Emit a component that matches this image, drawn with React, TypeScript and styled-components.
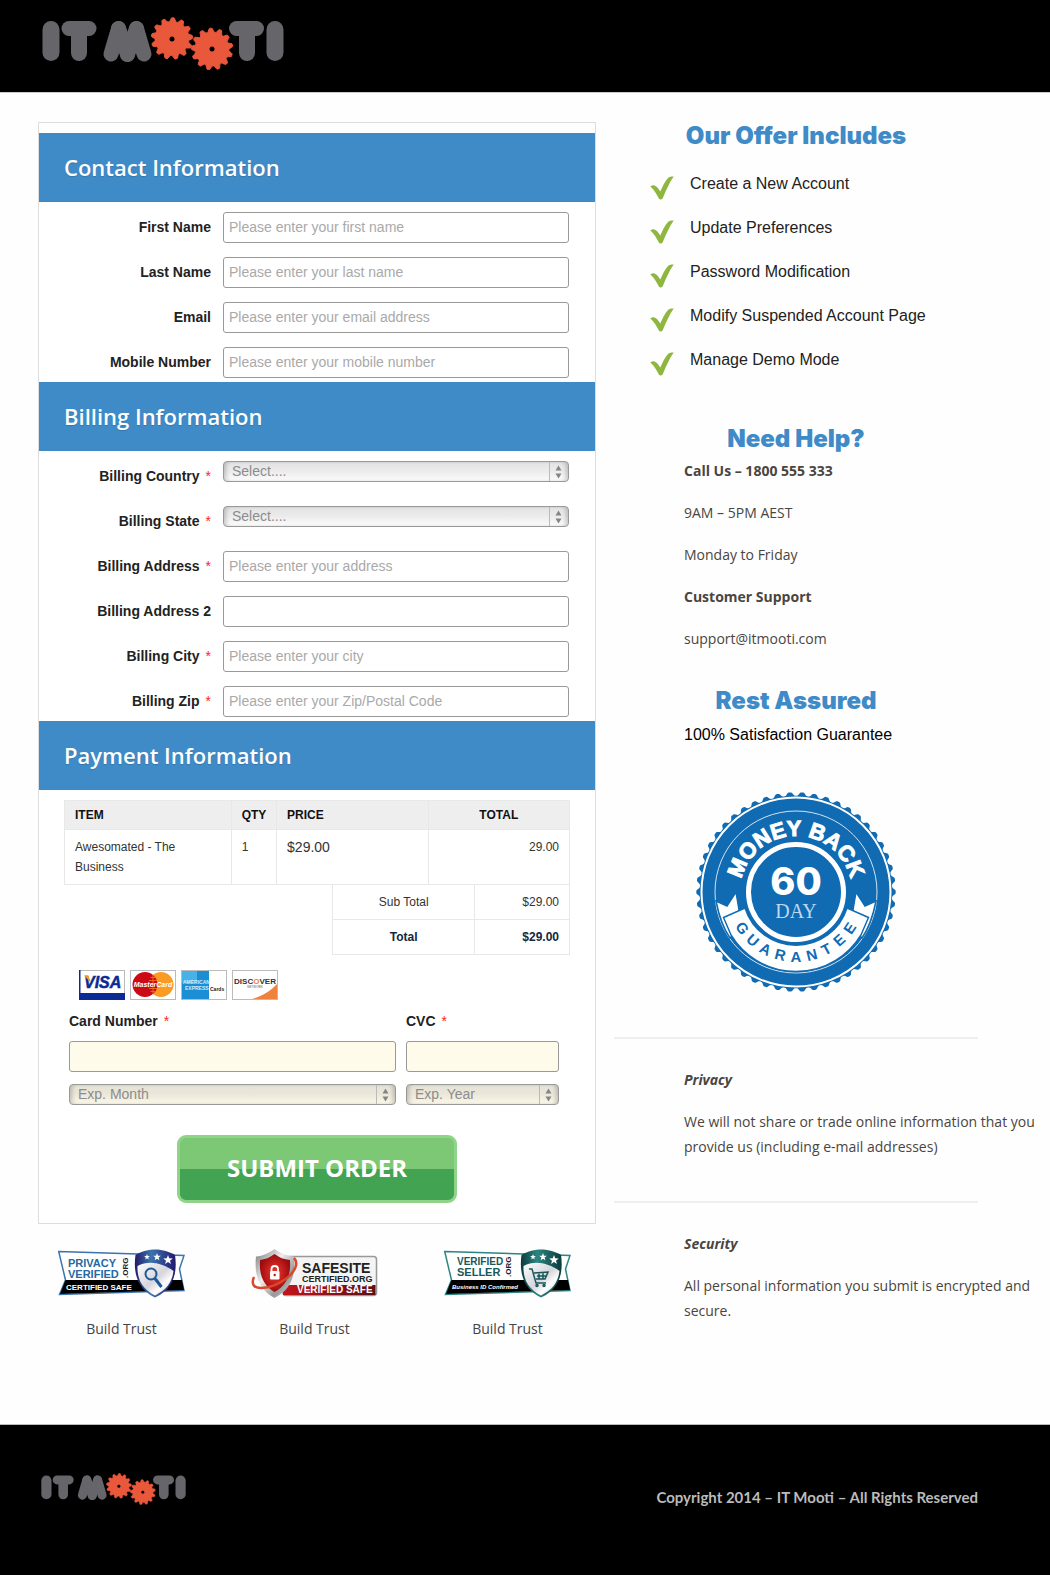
import React from "react";
import styled, { createGlobalStyle } from "styled-components";

const sans = `"Liberation Sans", Arial, Helvetica, sans-serif`;
const humanist = `"Open Sans", "Noto Sans", sans-serif`;
const heavy = `Inter, "Arial Black", sans-serif`;

const GlobalStyle = createGlobalStyle`
  *, *::before, *::after { box-sizing: border-box; }
  body { margin: 0; background: #fefefe; font-family: ${sans}; color: #222; }
  h2, p, ul { margin: 0; padding: 0; }
`;

/* ---------- page frame ---------- */

const Header = styled.header`
  display: flex;
  align-items: flex-start;
  height: 93px;
  padding: 17px 42px 0;
  background: #000;
  border-bottom: 1px solid #ccc;
`;

const Main = styled.main`
  display: grid;
  grid-template-columns: 558fr 436fr;
  gap: 18px;
  padding: 29px 0 83px 38px;
`;

const Footer = styled.footer`
  display: flex;
  align-items: center;
  justify-content: space-between;
  height: 151px;
  padding: 0 72px 22px 41px;
  background: #000;
  border-top: 1px solid #bbb;
`;

const Copyright = styled.p`
  font: 700 15px/24px Lato, sans-serif;
  color: #bbb;
  padding-top: 16px;
`;

/* ---------- order form ---------- */

const Panel = styled.form`
  padding: 10px 0 20px;
  border: 1px solid #ddd;
  background: #fff;
`;

const SectionTitle = styled.h2`
  padding: 0 25px 1px;
  background: #3f8bc8;
  color: #fff;
  font: 600 22px/68px ${humanist};
  text-shadow: 0 1px 1px rgba(0, 0, 0, 0.15);
`;

const FieldRow = styled.div`
  display: grid;
  grid-template-columns: 172px 1fr;
  column-gap: 12px;
  align-items: start;
  height: 45px;
  padding: 10px 26px 0 0;
`;

const Label = styled.label<{ $align?: "left" | "right" }>`
  font: 700 14px/31px ${sans};
  text-align: ${(p) => p.$align ?? "right"};
`;

const Star = styled.span`
  margin-left: 6px;
  color: #f22;
  font-weight: 400;
`;

const TextInput = styled.input<{ $cream?: boolean }>`
  width: 100%;
  height: 31px;
  padding: 0 5px 2px;
  border: 1px solid #999;
  border-radius: 3px;
  background: ${(p) => (p.$cream ? "#fffbea" : "#fff")};
  font: 14px ${sans};
  color: #333;
  &::placeholder { color: #a9a9a9; opacity: 1; }
`;

const SelectBox = styled.div`
  position: relative;
  height: 21px;
`;

const StyledSelect = styled.select<{ $cream?: boolean }>`
  display: block;
  width: 100%;
  height: 21px;
  padding: 0 26px 1px 8px;
  appearance: none;
  border: 1px solid #999;
  border-radius: 4px;
  background: ${(p) =>
    p.$cream
      ? "linear-gradient(#e4e1d5, #ebe8db 50%, #fbf8e8)"
      : "linear-gradient(#e2e2e2, #ececec 50%, #fcfcfc)"};
  box-shadow: inset 4px 0 4px -2px rgba(0, 0, 0, 0.2), inset -4px 0 4px -2px rgba(0, 0, 0, 0.2);
  font: 14px/18px ${sans};
  color: #8c8c8c;
`;

const Arrows = styled.svg`
  position: absolute;
  top: 1px;
  right: 1px;
  pointer-events: none;
`;

const PaymentBody = styled.div`
  padding: 10px 25px 0;
`;

const ItemsTable = styled.table<{ $totals?: boolean }>`
  width: ${(p) => (p.$totals ? "47%" : "100%")};
  margin-left: auto;
  margin-top: ${(p) => (p.$totals ? "-1px" : "0")};
  border-collapse: collapse;
  table-layout: fixed;
`;

const Th = styled.th<{ $center?: boolean }>`
  padding: 4px 10px;
  border: 1px solid #e8e8e8;
  background: #eee;
  color: #111;
  font: 700 12px/20px ${sans};
  text-align: ${(p) => (p.$center ? "center" : "left")};
`;

const Td = styled.td<{ $align?: string; $large?: boolean; $strong?: boolean }>`
  padding: 7px 10px;
  border: 1px solid #e8e8e8;
  font-family: ${sans};
  font-size: ${(p) => (p.$large ? "14px" : "12px")};
  font-weight: ${(p) => (p.$strong ? 700 : 400)};
  line-height: 20px;
  color: ${(p) => (p.$strong ? "#12283c" : "#333")};
  text-align: ${(p) => p.$align ?? "left"};
  vertical-align: top;
`;

const CardLogos = styled.div`
  display: flex;
  gap: 5px;
  padding: 15px 15px 6px;
`;

const CardGrid = styled.div`
  display: grid;
  grid-template-columns: 327fr 153fr;
  column-gap: 10px;
  padding: 0 11px 0 5px;
`;

const CardField = styled.div`
  display: grid;
  grid-template-rows: 35px 31px 21px;
  row-gap: 0;
  & > ${SelectBox} { margin-top: 12px; }
`;

const Submit = styled.button`
  display: block;
  width: 280px;
  height: 68px;
  margin: 42px auto 0;
  padding: 0 0 3px;
  border: 3px solid #8fd488;
  border-radius: 9px;
  background: linear-gradient(#7cc875 50%, #42a352 50%);
  color: #fff;
  font: 700 24px/59px ${humanist};
  cursor: pointer;
`;

const TrustRow = styled.div`
  display: flex;
  justify-content: space-between;
  padding: 25px 25px 0 20px;
`;

const TrustItem = styled.figure`
  display: grid;
  justify-items: center;
  row-gap: 18px;
  margin: 0;
`;

const TrustCaption = styled.figcaption`
  font: 14px/25px ${humanist};
  color: #444;
`;

/* ---------- side column ---------- */

const SideTitle = styled.h2`
  margin-right: 72px;
  color: #3f8bc8;
  font: 900 24px/28px ${heavy};
  text-align: center;
`;

const OfferList = styled.ul`
  margin: 12px 0 43px 36px;
  list-style: none;
`;

const OfferItem = styled.li`
  display: grid;
  grid-template-columns: 24px 1fr;
  column-gap: 16px;
  height: 44px;
  padding-top: 12px;
  font: 16px/20px ${sans};
  & > svg { margin-top: 2px; }
`;

const Copy = styled.div<{ $top: number; $bottom: number }>`
  display: grid;
  row-gap: 17px;
  padding: ${(p) => p.$top}px 0 ${(p) => p.$bottom}px 70px;
  font: 14px/25px ${humanist};
  color: #4a4540;
`;

const Guarantee = styled.p`
  font: 16px/25px ${sans};
  color: #000;
`;

const SealHolder = styled.div`
  display: flex;
  justify-content: center;
  margin: 0 72px 45px 0;
`;

const Rule = styled.hr`
  height: 2px;
  margin: 0 72px 0 0;
  border: 0;
  background: #eee;
`;

/* ---------- drawings ---------- */

function wave(cx: number, cy: number, r: number, amp: number, n: number, phase = 0) {
  const pts: string[] = [];
  const steps = n * 12;
  for (let i = 0; i < steps; i++) {
    const a = (i / steps) * Math.PI * 2;
    const k = Math.max(-1, Math.min(1, 1.5 * Math.cos(n * a + phase)));
    const d = r + amp * k;
    pts.push(`${(cx + d * Math.cos(a)).toFixed(2)},${(cy + d * Math.sin(a)).toFixed(2)}`);
  }
  return pts.join(" ");
}

const grey = "#66656a";

function Logo({ width }: { width: number }) {
  return (
    <svg width={width} viewBox="0 0 242 53" role="img" aria-label="IT Mooti">
      <g fill={grey}>
        <rect x="0.5" y="4" width="17" height="40" rx="8.5" />
        <rect x="19.5" y="4" width="35" height="15" rx="7.5" />
        <rect x="29" y="6" width="16" height="38" rx="8" />
        <rect x="187" y="4" width="35" height="15" rx="7.500" />
        <rect x="197" y="6" width="16" height="38" rx="8" />
        <rect x="224.500" y="4" width="17" height="40" rx="8.500" />
      </g>
      <g stroke={grey} strokeWidth="15" strokeLinecap="round">
        <line x1="69" y1="37" x2="76.500" y2="11.500" />
        <line x1="76.500" y1="11.500" x2="85.500" y2="37.500" />
        <line x1="85.500" y1="37.500" x2="94.500" y2="11.500" />
        <line x1="94.500" y1="11.500" x2="102" y2="37" />
      </g>
      <polygon points={wave(130, 21.5, 18.9, 1.9, 13, 1)} fill="#ea583b" stroke="#ea583b" strokeLinejoin="round" />
      <circle cx="130" cy="22" r="2.5" fill="#000" />
      <polygon points={wave(170, 32, 18.9, 1.9, 13, 2.4)} fill="#ea583b" stroke="#ea583b" strokeLinejoin="round" />
      <circle cx="170" cy="32" r="2.5" fill="#000" />
    </svg>
  );
}

const Check = () => (
  <svg width="24" height="24" viewBox="0 0 24 24" aria-hidden="true">
    <path d="M.3 10.500C2 9.200 4 9 5.500 10C7.500 11.300 9 13.300 10.300 15.500C12.500 10.500 15 5 18 2C19.500 .8 21.500 .5 23.700 .6C19.500 6.500 16 14.500 12.500 22.800C11.500 23.600 9.800 23.600 9 22.800C6.500 18 4 13.500 .3 10.500Z" fill="#8fb63f" />
  </svg>
);

const UpDown = () => (
  <Arrows width="20" height="19" viewBox="0 0 20 19" aria-hidden="true">
    <path d="M1.500 0V19" stroke="#bbb" />
    <path d="M7.500 8.500L10.500 3.500L13.500 8.500ZM7.500 11.500L10.500 16.500L13.500 11.500Z" fill="#858585" />
  </Arrows>
);

function Seal() {
  const blue = "#106bb3";
  return (
    <svg width="200" height="200" viewBox="-100 -100 200 200" role="img" aria-label="60 day money back guarantee">
      <polygon points={wave(0, 0, 98, 1.700, 50)} fill={blue} />
      <circle r="94.500" fill="none" stroke="#fff" strokeWidth="2" />
      <circle r="81" fill="none" stroke="#cfe3f2" strokeWidth="1" />
      <g fill="#fff" stroke={blue} strokeWidth="1.500">
        <path d="M-80 9L-69 14L-60 0L-57 18L-54 34L-66 46C-73 36 -77 24 -80 9Z" />
        <path d="M80 9L69 14L60 0L57 18L54 34L66 46C73 36 77 24 80 9Z" />
        <path d="M-72.500 25.500L-51 16A53.500 53.500 0 0 0 51 16L72.500 25.500L65 43A76 76 0 0 1 -65 43Z" />
      </g>
      <circle r="47.500" fill={blue} stroke="#fff" strokeWidth="5" />
      <defs>
        <path id="sealArc" d="M-53 18A56 56 0 1 1 53 18" />
      </defs>
      <text fontFamily={sans} fontWeight="700" fontSize="22" fill="#fff" stroke="#fff" strokeWidth="1" textAnchor="middle">
        <textPath href="#sealArc" startOffset="50%">MONEY BACK</textPath>
      </text>
      <g fontFamily={sans} fontWeight="700" fontSize="15" fill={blue} textAnchor="middle">
        {"GUARANTEE".split("").map((c, i) => (
          <text key={i} y="70" transform={`rotate(${(4 - i) * 14})`}>{c}</text>
        ))}
      </g>
      <text y="3" fontFamily={heavy} fontWeight="800" fontSize="38" fill="#fff" textAnchor="middle">60</text>
      <text y="26" fontFamily={`"Liberation Serif", serif`} fontSize="20" fill="#bcd8ee" textAnchor="middle">DAY</text>
    </svg>
  );
}

const CardFrame = ({ label, children }: { label: string; children: React.ReactNode }) => (
  <svg width="46" height="30" viewBox="0 0 46 30" role="img" aria-label={label}>
    <rect x=".5" y=".5" width="45" height="29" fill="#fff" stroke="#bbb" />
    {children}
  </svg>
);

const CardSet = () => (
  <CardLogos>
    <CardFrame label="Visa">
      <path d="M0 0H1.500V23H46V30H0Z" fill="#0a2a96" />
      <text x="5" y="18" fontFamily={sans} fontWeight="700" fontStyle="italic" fontSize="16" fill="#0a2a96" stroke="#0a2a96" strokeWidth=".5">VISA</text>
      <path d="M5 5.500H9.500L12 13Z" fill="#f29a1f" />
    </CardFrame>
    <CardFrame label="MasterCard">
      <circle cx="31" cy="14.500" r="12.500" fill="#fb9b24" />
      <circle cx="15" cy="14.500" r="12.500" fill="#cc0a16" />
      <path d="M23 5V24M20.500 7.500H26M19 10.500H27M19 18.500H27M20.500 21.500H26" stroke="#f0641e" fill="none" />
      <text x="23" y="17" fontFamily={sans} fontWeight="700" fontStyle="italic" fontSize="7" fill="#fff" textAnchor="middle">MasterCard</text>
    </CardFrame>
    <CardFrame label="American Express">
      <rect x="1" y="1" width="27" height="28" fill="#1c8fd4" />
      <rect x="1" y="1" width="15" height="12" fill="#46b2e6" />
      <g fontFamily={sans} fontWeight="700" fontSize="5" fill="#d3ecfa">
        <text x="2" y="14">AMERICAN</text>
        <text x="4" y="20">EXPRESS</text>
      </g>
      <text x="29" y="21" fontFamily={sans} fontWeight="700" fontSize="5" fill="#222">Cards</text>
    </CardFrame>
    <CardFrame label="Discover">
      <path d="M20 29C30 26 39 21 45 14V29Z" fill="#ef833b" />
      <text x="23" y="14" fontFamily={sans} fontWeight="700" fontSize="8" fill="#333" textAnchor="middle">
        DISC<tspan fill="#f08030">O</tspan>VER
      </text>
      <text x="23" y="18" fontFamily={sans} fontSize="3" fill="#555" textAnchor="middle">NETWORK</text>
    </CardFrame>
  </CardLogos>
);

const star = (x: number, y: number, r: number) =>
  Array.from({ length: 10 }, (_, i) => {
    const a = -Math.PI / 2 + (i * Math.PI) / 5;
    const d = i % 2 ? r * 0.42 : r;
    return `${(x + d * Math.cos(a)).toFixed(2)},${(y + d * Math.sin(a)).toFixed(2)}`;
  }).join(" ");

function FlagBadge({ id, dark, light, children, icon, label }: {
  id: string; dark: string; light: string; label: string; children: React.ReactNode; icon: React.ReactNode;
}) {
  return (
    <svg width="127" height="49" viewBox="0 0 127 49" role="img" aria-label={label}>
      <defs>
        <linearGradient id={`${id}Rim`} x1="0" y1="0" x2="1" y2="0">
          <stop offset="0" stopColor={dark} />
          <stop offset=".4" stopColor={light} />
          <stop offset="1" stopColor={dark} />
        </linearGradient>
        <linearGradient id={`${id}Face`} x1="0" y1="0" x2="1" y2="1">
          <stop offset="0" stopColor="#fff" />
          <stop offset=".5" stopColor="#d5d5dc" />
          <stop offset=".7" stopColor="#fff" />
          <stop offset="1" stopColor="#b8b8c4" />
        </linearGradient>
      </defs>
      <path d="M.700 2.500L126 6.500L121.500 20L126 41.500L1.500 45.500L7.500 31Z" fill="#fff" stroke={light} strokeWidth="1.500" />
      <path d="M7.500 31H124L126 41L2 45Z" fill="#000" />
      {children}
      <path d="M97 .5C103 .5 110 2 117 6C119 20 118 39 97 48.500C77 39 75.500 20 77.500 6C84 2 91 .5 97 .5Z" fill={`url(#${id}Rim)`} />
      <path d="M79.500 17C91 11 104 14 115.500 22C114 34 108 41 97 46.500C84 40 79 30 79.500 17Z" fill={`url(#${id}Face)`} />
      <polygon points={star(89, 8, 3)} fill="#fff" />
      <polygon points={star(99, 8, 4)} fill="#fff" />
      <polygon points={star(110, 11, 5)} fill="#fff" />
      {icon}
    </svg>
  );
}

const bold = { fontFamily: sans, fontWeight: 700 };

const PrivacyBadge = () => (
  <FlagBadge
    id="privacy" dark="#221a6e" light="#3c74b0" label="Privacy Verified"
    icon={<g fill="none" stroke="#1d5a94"><circle cx="93" cy="25" r="5.500" strokeWidth="2" /><path d="M97 29.500L103.500 38" strokeWidth="3" /></g>}
  >
    <g {...bold} fill="#2668a2">
      <text x="10" y="18" fontSize="11">PRIVACY</text>
      <text x="10" y="29" fontSize="11">VERIFIED</text>
    </g>
    <text {...bold} transform="translate(70 29) rotate(-90)" fontSize="8" fill="#222">.ORG</text>
    <text {...bold} x="8" y="41" fontSize="8" fill="#fff">CERTIFIED SAFE</text>
  </FlagBadge>
);

const SellerBadge = () => (
  <FlagBadge
    id="seller" dark="#0b3b3d" light="#2b8582" label="Verified Seller"
    icon={<g fill="none" stroke="#17585a" strokeWidth="1.500"><path d="M85 20H88L92 34H102M90 24L104 23L101 30H92M93 27H103M95 24V30M99 24V30" /><circle cx="93" cy="36.500" r="1" /><circle cx="100" cy="36.500" r="1" /></g>}
  >
    <g {...bold} fill="#17585a">
      <text x="13" y="16" fontSize="10">VERIFIED</text>
      <text x="13" y="27" fontSize="11">SELLER</text>
    </g>
    <text {...bold} transform="translate(67 28) rotate(-90)" fontSize="8" fill="#222">.ORG</text>
    <text {...bold} x="8" y="40" fontSize="6" fontStyle="italic" fill="#fff">Business ID Confirmed</text>
  </FlagBadge>
);

const SafeSiteBadge = () => (
  <svg width="127" height="49" viewBox="0 0 127 49" role="img" aria-label="SafeSite Certified">
    <defs>
      <linearGradient id="steel" x1="0" y1="0" x2="1" y2="1">
        <stop offset="0" stopColor="#777" /><stop offset=".4" stopColor="#eee" /><stop offset=".7" stopColor="#999" /><stop offset="1" stopColor="#ddd" />
      </linearGradient>
      <radialGradient id="ruby"><stop offset="0" stopColor="#f5382c" /><stop offset="1" stopColor="#9c0b10" /></radialGradient>
      <linearGradient id="band" x1="0" x2="1"><stop offset="0" stopColor="#c3151b" /><stop offset="1" stopColor="#5a1014" /></linearGradient>
    </defs>
    <rect x="32" y="7.500" width="93.500" height="39" rx="3" fill="#f4f4f4" stroke="#999" strokeWidth="1.500" />
    <path d="M32 36H124.500V46H32Z" fill="url(#band)" />
    <path d="M23.500 0C29 4 36 7 43 7.500C45 26 40 41 23.500 49C8 41 3 26 5 7.500C12 7 18 4 23.500 0Z" fill="url(#steel)" />
    <path d="M23.500 5C28 8.500 33 10.500 39 11C40 26 36 36 23.500 43C12 36 8 26 9 11C14 10.500 19 8.500 23.500 5Z" fill="url(#ruby)" />
    <path d="M3 28C-4 44 20 41 36 29C46 21 47 13 43 9" fill="none" stroke="#d9482a" strokeWidth="2.500" />
    <rect x="19" y="22" width="9.500" height="8.500" rx="1" fill="#fff" />
    <path d="M20.500 22V20C20.500 16 27 16 27 20V22" fill="none" stroke="#fff" strokeWidth="1.800" />
    <circle cx="23.700" cy="26" r="1.200" fill="#c3151b" />
    <g {...bold} fill="#222">
      <text x="51" y="24" fontSize="14">SAFESITE</text>
      <text x="51" y="33" fontSize="9">CERTIFIED.ORG</text>
    </g>
    <text {...bold} x="46" y="44" fontSize="10" fill="#fff">VERIFIED SAFE</text>
  </svg>
);

/* ---------- composed parts ---------- */

interface Field { id: string; label: string; hint?: string; required?: boolean; select?: boolean }

const contact: Field[] = [
  { id: "first", label: "First Name", hint: "Please enter your first name" },
  { id: "last", label: "Last Name", hint: "Please enter your last name" },
  { id: "email", label: "Email", hint: "Please enter your email address" },
  { id: "mobile", label: "Mobile Number", hint: "Please enter your mobile number" },
];

const billing: Field[] = [
  { id: "country", label: "Billing Country", hint: "Select....", required: true, select: true },
  { id: "state", label: "Billing State", hint: "Select....", required: true, select: true },
  { id: "address", label: "Billing Address", hint: "Please enter your address", required: true },
  { id: "address2", label: "Billing Address 2" },
  { id: "city", label: "Billing City", hint: "Please enter your city", required: true },
  { id: "zip", label: "Billing Zip", hint: "Please enter your Zip/Postal Code", required: true },
];

const Dropdown = ({ id, text, cream, label }: { id: string; text: string; cream?: boolean; label?: string }) => (
  <SelectBox>
    <StyledSelect id={id} $cream={cream} aria-label={label}>
      <option>{text}</option>
    </StyledSelect>
    <UpDown />
  </SelectBox>
);

const Fields = ({ items }: { items: Field[] }) => (
  <>
    {items.map((f) => (
      <FieldRow key={f.id}>
        <Label htmlFor={f.id}>
          {f.label}
          {f.required && <Star>*</Star>}
        </Label>
        {f.select ? <Dropdown id={f.id} text={f.hint!} /> : <TextInput id={f.id} placeholder={f.hint} />}
      </FieldRow>
    ))}
  </>
);

const offers = [
  "Create a New Account",
  "Update Preferences",
  "Password Modification",
  "Modify Suspended Account Page",
  "Manage Demo Mode",
];

export default function App() {
  return (
    <>
      <GlobalStyle />
      <Header>
        <Logo width={242} />
      </Header>
      <Main>
        <div>
          <Panel onSubmit={(e) => e.preventDefault()}>
            <SectionTitle>Contact Information</SectionTitle>
            <Fields items={contact} />
            <SectionTitle>Billing Information</SectionTitle>
            <Fields items={billing} />
            <SectionTitle>Payment Information</SectionTitle>
            <PaymentBody>
              <ItemsTable>
                <colgroup>
                  <col style={{ width: "33%" }} />
                  <col style={{ width: "9%" }} />
                  <col style={{ width: "30%" }} />
                  <col style={{ width: "28%" }} />
                </colgroup>
                <thead>
                  <tr><Th>ITEM</Th><Th>QTY</Th><Th>PRICE</Th><Th $center>TOTAL</Th></tr>
                </thead>
                <tbody>
                  <tr>
                    <Td>Awesomated - The Business</Td>
                    <Td>1</Td>
                    <Td $large>$29.00</Td>
                    <Td $align="right">29.00</Td>
                  </tr>
                </tbody>
              </ItemsTable>
              <ItemsTable $totals>
                <colgroup>
                  <col style={{ width: "60%" }} />
                  <col style={{ width: "40%" }} />
                </colgroup>
                <tbody>
                  <tr><Td $align="center">Sub Total</Td><Td $align="right">$29.00</Td></tr>
                  <tr><Td $align="center" $strong>Total</Td><Td $align="right" $strong>$29.00</Td></tr>
                </tbody>
              </ItemsTable>
              <CardSet />
              <CardGrid>
                <CardField>
                  <Label htmlFor="card" $align="left">Card Number<Star>*</Star></Label>
                  <TextInput id="card" $cream />
                  <Dropdown id="month" text="Exp. Month" label="Expiry month" cream />
                </CardField>
                <CardField>
                  <Label htmlFor="cvc" $align="left">CVC<Star>*</Star></Label>
                  <TextInput id="cvc" $cream />
                  <Dropdown id="year" text="Exp. Year" label="Expiry year" cream />
                </CardField>
              </CardGrid>
              <Submit type="submit">SUBMIT ORDER</Submit>
            </PaymentBody>
          </Panel>
          <TrustRow>
            {[PrivacyBadge, SafeSiteBadge, SellerBadge].map((Badge, i) => (
              <TrustItem key={i}>
                <Badge />
                <TrustCaption>Build Trust</TrustCaption>
              </TrustItem>
            ))}
          </TrustRow>
        </div>
        <aside>
          <SideTitle>Our Offer Includes</SideTitle>
          <OfferList>
            {offers.map((o) => (
              <OfferItem key={o}><Check />{o}</OfferItem>
            ))}
          </OfferList>
          <SideTitle>Need Help?</SideTitle>
          <Copy $top={5} $bottom={36}>
            <strong>Call Us – 1800 555 333</strong>
            <p>9AM – 5PM AEST</p>
            <p>Monday to Friday</p>
            <strong>Customer Support</strong>
            <p>support@itmooti.com</p>
          </Copy>
          <SideTitle>Rest Assured</SideTitle>
          <Copy $top={7} $bottom={45}>
            <Guarantee>100% Satisfaction Guarantee</Guarantee>
          </Copy>
          <SealHolder><Seal /></SealHolder>
          <Rule />
          <Copy $top={28} $bottom={42}>
            <strong><em>Privacy</em></strong>
            <p>We will not share or trade online information that you provide us (including e-mail addresses)</p>
          </Copy>
          <Rule />
          <Copy $top={28} $bottom={0}>
            <strong><em>Security</em></strong>
            <p>All personal information you submit is encrypted and secure.</p>
          </Copy>
        </aside>
      </Main>
      <Footer>
        <Logo width={145} />
        <Copyright>Copyright 2014 – IT Mooti – All Rights Reserved</Copyright>
      </Footer>
    </>
  );
}
